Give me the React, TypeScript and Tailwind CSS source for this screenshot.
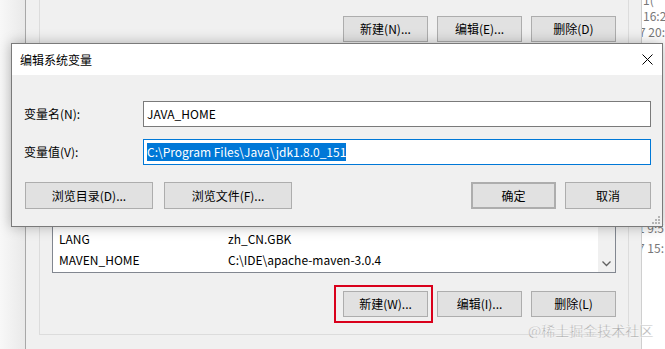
import React from 'react'

const Btn = ({ label, w = 'w-[85px]', extra = '' }: { label: string; w?: string; extra?: string }) => (
  <div
    className={`${w} h-[26px] flex items-center justify-center bg-[#e1e1e1] border border-[#adadad] text-[12px] text-black ${extra}`}
  >
    {label}
  </div>
)

const EditDialog = () => (
  <div className="absolute left-[11px] top-[43px] w-[652px] h-[184px] border border-[#7a7a7a] bg-[#f0f0f0] shadow-[0_0_12px_rgba(0,0,0,0.28)] flex flex-col">
    <div className="h-[31px] bg-white flex items-center justify-between pl-[8px] pr-[9px]">
      <span className="text-[12px] text-black">编辑系统变量</span>
      <svg width="11" height="11" viewBox="0 0 11 11">
        <path d="M0.5 0.5 L10.5 10.5 M10.5 0.5 L0.5 10.5" stroke="#000" strokeWidth="1" />
      </svg>
    </div>

    <div className="flex-1 flex flex-col pl-[12px] pr-[11px] pt-[26px] relative">
      <div className="flex items-center">
        <span className="w-[119px] text-[12px] text-black">变量名(N):</span>
        <div className="flex-1 h-[26px] bg-white border border-[#7a7a7a] flex items-center pl-[3px] text-[12px] text-black">
          JAVA_HOME
        </div>
      </div>
      <div className="flex items-center mt-[12px]">
        <span className="w-[119px] text-[12px] text-black">变量值(V):</span>
        <div className="flex-1 h-[26px] bg-white border border-[#0078d7] flex items-center pl-[3px] text-[12px]">
          <span className="bg-[#0078d7] text-white leading-[18px]">C:\Program Files\Java\jdk1.8.0_151</span>
        </div>
      </div>
      <div className="flex items-center mt-[17px] ml-[1px]">
        <div className="flex gap-[11px]">
          <Btn label="浏览目录(D)..." w="w-[128px]" extra="h-[27px]" />
          <Btn label="浏览文件(F)..." w="w-[128px]" extra="h-[27px]" />
        </div>
        <div className="ml-auto flex gap-[9px]">
          <Btn label="确定" w="w-[85px]" extra="h-[27px] border-2 border-[#0078d7]" />
          <Btn label="取消" w="w-[86px]" extra="h-[27px]" />
        </div>
      </div>
      <svg className="absolute right-[2px] bottom-[2px]" width="10" height="10" viewBox="0 0 10 10">
        <rect x="8" y="2" width="2" height="2" fill="#b4b4b4" />
        <rect x="5" y="5" width="2" height="2" fill="#b4b4b4" />
        <rect x="8" y="5" width="2" height="2" fill="#b4b4b4" />
        <rect x="2" y="8" width="2" height="2" fill="#b4b4b4" />
        <rect x="5" y="8" width="2" height="2" fill="#b4b4b4" />
        <rect x="8" y="8" width="2" height="2" fill="#b4b4b4" />
      </svg>
    </div>
  </div>
)

const App = () => {
  return (
    <div className="relative w-[665px] h-[349px] overflow-hidden flex font-['Noto_Sans_CJK_SC','Noto_Sans',sans-serif] text-black">
      <div className="w-[25px] h-full bg-gradient-to-r from-[#f8f8f8] to-[#e9e9e9]" />

      <div className="w-[617px] h-full bg-[#f0f0f0] border-l border-[#a8a8a8] border-r border-r-[#cfcfcf] pl-[13px] pr-[12px]">
        <div className="border-x border-b border-[#dcdcdc] pl-[12px] pr-[12px] flex flex-col">
          <div className="flex justify-end gap-[9px] pt-[16px]">
            <Btn label="新建(N)..." />
            <Btn label="编辑(E)..." />
            <Btn label="删除(D)" />
          </div>

          <div className="mt-[12px] h-[219px] bg-white border border-[#828790] flex">
            <div className="flex-1 flex flex-col justify-end pb-[2px] text-[12px]">
              <div className="h-[21px] flex items-center pl-[6px]">
                <span className="w-[169px]">LANG</span>
                <span>zh_CN.GBK</span>
              </div>
              <div className="h-[21px] flex items-center pl-[6px]">
                <span className="w-[169px]">MAVEN_HOME</span>
                <span>C:\IDE\apache-maven-3.0.4</span>
              </div>
            </div>
            <div className="w-[17px] bg-[#f0f0f0] flex flex-col justify-end items-center pb-[5px]">
              <svg width="9" height="6" viewBox="0 0 9 6">
                <path d="M0.5 0.5 L4.5 4.5 L8.5 0.5" stroke="#606060" strokeWidth="1.3" fill="none" />
              </svg>
            </div>
          </div>

          <div className="flex justify-end gap-[9px] mt-[18px] pb-[17px]">
            <div className="relative">
              <Btn label="新建(W)..." />
              <div className="absolute -left-[9px] -top-[6px] w-[99px] h-[38px] border-2 border-[#d9001b]" />
            </div>
            <Btn label="编辑(I)..." />
            <Btn label="删除(L)" />
          </div>
        </div>
      </div>

      <div className="w-[23px] h-full bg-white overflow-hidden flex flex-col text-[12px] text-[#777777] whitespace-nowrap">
        <div className="mt-[-8px] h-[16px] leading-[16px] pl-[1px]">1(</div>
        <div className="h-[16px] leading-[16px] pl-[1px]">16:2</div>
        <div className="h-[16px] leading-[16px] ml-[-3px]">7 20:</div>
        <div className="mt-[178px] h-[20px] leading-[20px] ml-[-4px]">1 9:5</div>
        <div className="h-[20px] leading-[20px] ml-[-4px]">7 15:</div>
      </div>

      <EditDialog />

      <div className="absolute left-[528px] top-[320px] text-[14px] text-[#a8a8a8] [-webkit-text-stroke:0.3px_#ffffff] whitespace-nowrap">
        @稀土掘金技术社区
      </div>
    </div>
  )
}

export default App
